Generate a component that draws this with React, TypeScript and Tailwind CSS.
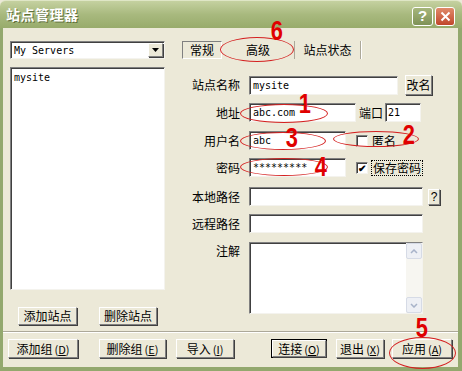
import React from 'react';

const cjk = "font-['Noto_Sans_CJK_SC',sans-serif]";
const mono = "font-['DejaVu_Sans_Mono','Liberation_Mono',monospace] text-[10px]";
const sunken =
  'bg-white border border-t-[#808080] border-l-[#808080] border-b-[#f4f3ee] border-r-[#f4f3ee] shadow-[inset_1px_1px_0_#404040]';
const raised =
  'flex items-center justify-center bg-[#ECE9D8] border border-t-white border-l-white border-b-[#808080] border-r-[#808080] shadow-[1px_1px_0_#404040] text-[12px] leading-none text-black';

function Btn({ className, children }: { className: string; children: React.ReactNode }) {
  return <div className={`${raised} ${className}`}>{children}</div>;
}

function Accel({ label, k }: { label: string; k: string }) {
  return (
    <span>
      {label}
      <span className="text-[11px] ml-[2px]">
        (<u>{k}</u>)
      </span>
    </span>
  );
}

function Label({ children }: { children: React.ReactNode }) {
  return <div className="w-[58px] text-right text-[12px] leading-none">{children}</div>;
}

function Check({ checked }: { checked?: boolean }) {
  return (
    <div className={`${sunken} w-[12px] h-[12px] flex items-center justify-center text-[10px] leading-none font-bold`}>
      {checked ? '✔' : ''}
    </div>
  );
}

// red hand-drawn markers laid over the dialog
function Num({ n, className }: { n: string; className: string }) {
  return (
    <div
      className={`absolute font-['Liberation_Sans',sans-serif] font-bold text-[#e00000] text-[28px] leading-none scale-x-[0.78] ${className}`}
    >
      {n}
    </div>
  );
}

function Ring({ className }: { className: string }) {
  return <div className={`absolute border border-[#d42020] rounded-[50%] ${className}`} />;
}

export default function App() {
  return (
    <div className={`relative w-[462px] h-[371px] flex flex-col overflow-hidden bg-[#ECE9D8] text-black ${cjk}`}>
      {/* title bar */}
      <div className="h-[28px] flex items-center bg-gradient-to-b from-[#c5d1a0] via-[#a8b97e] to-[#98ab6b] border-t border-[#dfe6c6] rounded-t-[6px]">
        <div className="ml-[6px] text-white font-bold text-[14px] tracking-[0.5px] [text-shadow:1px_1px_0_#5f6f3c]">
          站点管理器
        </div>
        <div className="ml-auto mr-[7px] flex gap-[2px] mt-[4px]">
          <div className="w-[21px] h-[19px] rounded-[3px] border border-white bg-gradient-to-b from-[#a6b67c] to-[#7f9257] flex items-center justify-center text-white font-bold text-[15px] font-['Liberation_Sans',sans-serif]">
            ?
          </div>
          <div className="w-[20px] h-[19px] rounded-[3px] border border-white bg-gradient-to-b from-[#e08a6a] to-[#c0452b] flex items-center justify-center">
            <svg width="11" height="11" viewBox="0 0 11 11">
              <path d="M1.5 1.5 L9.5 9.5 M9.5 1.5 L1.5 9.5" stroke="white" strokeWidth="2" />
            </svg>
          </div>
        </div>
      </div>

      {/* body */}
      <div className="flex-1 flex flex-col border-l-[3px] border-r-[4px] border-b-[4px] border-[#93a86e]">
        <div className="h-[303px] flex">
          {/* left column */}
          <div className="ml-[7px] w-[155px] pt-[13px] flex flex-col">
            <div className={`${sunken} h-[18px] flex items-center`}>
              <span className={`${mono} ml-[3px] flex-1`}>My Servers</span>
              <div className={`${raised} w-[15px] h-[14px] mr-[1px]`}>
                <svg width="7" height="4" viewBox="0 0 7 4">
                  <path d="M0 0 H7 L3.5 4 Z" fill="black" />
                </svg>
              </div>
            </div>
            <div className={`${sunken} mt-[8px] h-[223px] pl-[3px] pt-[2px]`}>
              <div className={mono}>mysite</div>
            </div>
            <div className="mt-[17px] flex">
              <Btn className="ml-[8px] w-[59px] h-[18px]">添加站点</Btn>
              <Btn className="ml-[22px] w-[58px] h-[18px] text-[#aca899]">删除站点</Btn>
            </div>
          </div>

          {/* right panel */}
          <div className="ml-[17px] pt-[13px] flex flex-col text-[12px]">
            <div className="h-[18px] flex items-stretch leading-none">
              <div className="w-[40px] flex items-center justify-center border border-t-[#808080] border-l-[#808080] border-r-white border-b-white">
                常规
              </div>
              <div className="w-[72px] flex items-center justify-center">高级</div>
              <div className="w-[66px] flex items-center justify-center border-l border-[#aca899]">站点状态</div>
              <div className="w-[2px] border-l border-[#aca899] border-r border-r-white" />
            </div>

            <div className="mt-[16px] flex items-center h-[20px]">
              <Label>站点名称</Label>
              <div className={`${sunken} ml-[9px] w-[149px] h-[19px] bg-[#d9d6ca] flex items-center`}>
                <span className={`${mono} ml-[3px]`}>mysite</span>
              </div>
              <Btn className="ml-[7px] w-[27px] h-[20px]">改名</Btn>
            </div>

            <div className="mt-[8px] flex items-center h-[19px]">
              <Label>地址</Label>
              <div className={`${sunken} ml-[9px] w-[107px] h-[19px] flex items-center`}>
                <span className={`${mono} ml-[3px]`}>abc.com</span>
              </div>
              <div className="ml-[3px] w-[26px] leading-none">端口</div>
              <div className={`${sunken} w-[36px] h-[19px] flex items-center`}>
                <span className={`${mono} ml-[2px]`}>21</span>
              </div>
            </div>

            <div className="mt-[9px] flex items-center h-[19px]">
              <Label>用户名</Label>
              <div className={`${sunken} ml-[9px] w-[97px] h-[19px] flex items-center`}>
                <span className={`${mono} ml-[3px]`}>abc</span>
              </div>
              <div className="ml-[10px]">
                <Check />
              </div>
              <div className="ml-[4px] leading-none">匿名</div>
            </div>

            <div className="mt-[8px] flex items-center h-[19px]">
              <Label>密码</Label>
              <div className={`${sunken} ml-[9px] w-[97px] h-[19px] flex items-center`}>
                <span className={`${mono} ml-[3px]`}>*********</span>
              </div>
              <div className="ml-[10px]">
                <Check checked />
              </div>
              <div className="ml-[4px] leading-none outline-1 outline-dotted outline-black px-[1px] py-[1px]">保存密码</div>
            </div>

            <div className="mt-[10px] flex items-center h-[19px]">
              <Label>本地路径</Label>
              <div className={`${sunken} ml-[9px] w-[174px] h-[19px]`} />
              <Btn className="ml-[5px] w-[12px] h-[16px] text-[10px] font-['Liberation_Sans',sans-serif]">?</Btn>
            </div>

            <div className="mt-[8px] flex items-center h-[19px]">
              <Label>远程路径</Label>
              <div className={`${sunken} ml-[9px] w-[174px] h-[19px]`} />
            </div>

            <div className="mt-[9px] flex items-start">
              <div className="mt-[3px]">
                <Label>注解</Label>
              </div>
              <div className={`${sunken} ml-[9px] w-[174px] h-[72px] flex justify-end`}>
                <div className="w-[16px] h-full bg-[#f7f6f1] flex flex-col justify-between">
                  <div className="h-[16px] rounded-[2px] bg-[#eef0f5] border border-[#d6dbe6] flex items-center justify-center">
                    <svg width="8" height="5" viewBox="0 0 8 5">
                      <path d="M1 4 L4 1 L7 4" stroke="#a8b3c9" strokeWidth="1.5" fill="none" />
                    </svg>
                  </div>
                  <div className="h-[16px] rounded-[2px] bg-[#eef0f5] border border-[#d6dbe6] flex items-center justify-center">
                    <svg width="8" height="5" viewBox="0 0 8 5">
                      <path d="M1 1 L4 4 L7 1" stroke="#a8b3c9" strokeWidth="1.5" fill="none" />
                    </svg>
                  </div>
                </div>
              </div>
            </div>
          </div>
        </div>

        {/* separator */}
        <div className="h-[2px] border-t border-[#aca899] border-b border-b-white" />

        {/* bottom buttons */}
        <div className="mt-[6px] flex">
          <Btn className="ml-[5px] w-[70px] h-[19px]">
            <Accel label="添加组" k="D" />
          </Btn>
          <Btn className="ml-[21px] w-[67px] h-[19px]">
            <Accel label="删除组" k="E" />
          </Btn>
          <Btn className="ml-[10px] w-[58px] h-[19px]">
            <Accel label="导入" k="I" />
          </Btn>
          <div className="ml-[37px] w-[56px] h-[19px] border border-black">
            <Btn className="w-full h-full">
              <Accel label="连接" k="O" />
            </Btn>
          </div>
          <Btn className="ml-[9px] w-[48px] h-[19px]">
            <Accel label="退出" k="X" />
          </Btn>
          <Btn className="ml-[8px] w-[60px] h-[19px]">
            <Accel label="应用" k="A" />
          </Btn>
        </div>
      </div>

      {/* annotations */}
      <Ring className="left-[220px] top-[37px] w-[74px] h-[25px]" />
      <Num n="6" className="left-[269px] top-[17px]" />
      <Ring className="left-[240px] top-[104px] w-[88px] h-[19px]" />
      <Num n="1" className="left-[297px] top-[90px]" />
      <Ring className="left-[240px] top-[132px] w-[86px] h-[18px]" />
      <Num n="3" className="left-[284px] top-[124px]" />
      <Ring className="left-[333px] top-[131px] w-[86px] h-[16px]" />
      <Num n="2" className="left-[401px] top-[121px]" />
      <Ring className="left-[240px] top-[158px] w-[88px] h-[18px]" />
      <Num n="4" className="left-[313px] top-[153px]" />
      <Ring className="left-[389px] top-[337px] w-[67px] h-[32px]" />
      <Num n="5" className="left-[414px] top-[314px]" />
    </div>
  );
}
